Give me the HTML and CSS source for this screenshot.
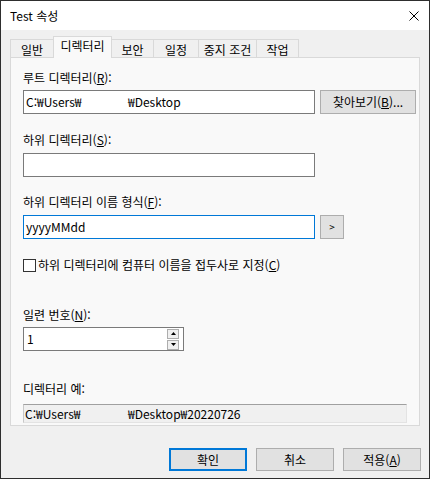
FILE: index.html
```html
<!DOCTYPE html>
<html lang="ko">
<head>
<meta charset="utf-8">
<title>Test 속성</title>
<link rel="stylesheet" href="styles.css">
</head>
<body>
<div class="window">
  <div class="titlebar">
    <span class="title">Test 속성</span>
    <svg class="close" width="10" height="10" viewBox="0 0 10 10"><path d="M0.5 0.5 L9.5 9.5 M9.5 0.5 L0.5 9.5" stroke="#000" stroke-width="1" fill="none"/></svg>
  </div>
  <div class="client">
    <div class="tabs">
      <div class="tab t1">일반</div>
      <div class="tab sel t2">디렉터리</div>
      <div class="tab t3">보안</div>
      <div class="tab t4">일정</div>
      <div class="tab t5">중지 조건</div>
      <div class="tab t6">작업</div>
    </div>
    <div class="panel">
      <div class="label lb1">루트 디렉터리(<u>R</u>):</div>
      <div class="row r1">
        <div class="edit"><span class="pre">C:₩Users₩</span>₩Desktop</div>
        <div class="btn browse">찾아보기(<u>B</u>)...</div>
      </div>
      <div class="label lb2">하위 디렉터리(<u>S</u>):</div>
      <div class="row r2">
        <div class="edit"></div>
      </div>
      <div class="label lb3">하위 디렉터리 이름 형식(<u>F</u>):</div>
      <div class="row r3">
        <div class="edit focus">yyyyMMdd</div>
        <div class="btn small">&gt;</div>
      </div>
      <div class="check">
        <span class="box"></span>
        <span class="check-text">하위 디렉터리에 컴퓨터 이름을 접두사로 지정(<u>C</u>)</span>
      </div>
      <div class="label lb4">일련 번호(<u>N</u>):</div>
      <div class="spin">
        <span class="spin-val">1</span>
        <div class="spin-btns">
          <div class="sb"><svg width="5" height="3" viewBox="0 0 5 3"><path d="M2.5 0 L5 3 L0 3 Z" fill="#000"/></svg></div>
          <div class="sb"><svg width="5" height="3" viewBox="0 0 5 3"><path d="M0 0 L5 0 L2.5 3 Z" fill="#000"/></svg></div>
        </div>
      </div>
      <div class="label lb5">디렉터리 예:</div>
      <div class="readonly"><span class="pre2">C:₩Users₩</span>₩Desktop₩20220726</div>
    </div>
    <div class="buttons">
      <div class="btn dlg default">확인</div>
      <div class="btn dlg">취소</div>
      <div class="btn dlg">적용(<u>A</u>)</div>
    </div>
  </div>
</div>
</body>
</html>
```
FILE: styles.css
```css
* { box-sizing: border-box; margin: 0; padding: 0; }
html, body { background: #ffffff; }
body {
  margin: 0;
  font-family: "Noto Sans CJK KR", "Noto Sans", sans-serif;
  font-size: 12px;
  color: #000;
}
u { text-decoration: underline; text-underline-offset: 1px; }

.window {
  width: 430px;
  height: 479px;
  border: 1px solid #2e2e2e;
  background: #f0f0f0;
  display: flex;
  flex-direction: column;
}
.titlebar {
  height: 29px;
  background: #ffffff;
  display: flex;
  align-items: center;
  justify-content: space-between;
  padding: 0 10px 0 9px;
  flex: none;
}
.title { line-height: 16px; }
.close { display: block; }

.client {
  padding: 0 9px;
  display: flex;
  flex-direction: column;
  flex: 1;
}
.tabs {
  height: 27px;
  display: flex;
  align-items: flex-end;
  flex: none;
}
.tab {
  height: 18px;
  border: 1px solid #d9d9d9;
  border-bottom: none;
  background: #f0f0f0;
  margin-left: -1px;
  display: flex;
  justify-content: center;
  padding-top: 2px;
  line-height: 16px;
}
.t1 { width: 44px; margin-left: 0; }
.t2 { width: 59px; }
.t3 { width: 43px; }
.t4 { width: 46px; }
.t5 { width: 59px; }
.t6 { width: 43px; }
.tab.sel {
  height: 22px;
  margin-bottom: -1px;
  background: #f9f9f9;
  position: relative;
  z-index: 1;
  padding-top: 1px;
}

.panel {
  height: 369px;
  border: 1px solid #d9d9d9;
  background: #f9f9f9;
  padding: 0 4px 0 12px;
  flex: none;
}
.label { line-height: 16px; height: 16px; white-space: nowrap; }
.lb1 { margin-top: 12px; }
.lb2 { margin-top: 18px; }
.lb3 { margin-top: 17px; }
.lb4 { margin-top: 34px; }
.lb5 { margin-top: 30px; }

.row { display: flex; gap: 5px; }
.r1 { margin-top: 4px; }
.r2 { margin-top: 5px; }
.r3 { margin-top: 5px; }

.edit {
  width: 292px;
  height: 24px;
  border: 1px solid #7a7a7a;
  background: #ffffff;
  padding-left: 2px;
  line-height: 22px;
  white-space: nowrap;
  flex: none;
}
.edit.focus { border-color: #0078d7; }
.pre { display: inline-block; width: 102px; }
.pre2 { display: inline-block; width: 103px; }

.btn {
  background: #e1e1e1;
  border: 1px solid #adadad;
  display: flex;
  align-items: center;
  justify-content: center;
  white-space: nowrap;
  line-height: 16px;
  flex: none;
}
.browse { width: 96px; height: 24px; }
.small { width: 24px; height: 24px; font-size: 10px; }

.check {
  margin-top: 18px;
  height: 16px;
  display: flex;
  align-items: center;
  gap: 2px;
}
.box {
  width: 13px;
  height: 13px;
  border: 1px solid #333333;
  background: #ffffff;
  flex: none;
}
.check-text { line-height: 16px; white-space: nowrap; }

.spin {
  margin-top: 4px;
  width: 161px;
  height: 24px;
  border: 1px solid #7a7a7a;
  background: #ffffff;
  display: flex;
  align-items: center;
  justify-content: space-between;
  padding: 0 4px 0 3px;
}
.spin-val { line-height: 16px; }
.spin-btns { display: flex; flex-direction: column; gap: 1px; }
.sb {
  width: 12px;
  height: 10px;
  border: 1px solid #adadad;
  background: #f0f0f0;
  display: flex;
  align-items: center;
  justify-content: center;
}
.sb svg { display: block; }

.readonly {
  margin-top: 7px;
  width: 384px;
  height: 19px;
  border: 1px solid #e3e3e3;
  border-top-color: #a0a0a0;
  border-left-color: #c8c8c8;
  background: #f0f0f0;
  padding-left: 1px;
  line-height: 17px;
  white-space: nowrap;
}

.buttons {
  margin-top: 22px;
  margin-right: -1px;
  display: flex;
  justify-content: flex-end;
  gap: 9px;
}
.dlg { width: 78px; height: 23px; }
.dlg.default { border: 2px solid #0078d7; }
```
